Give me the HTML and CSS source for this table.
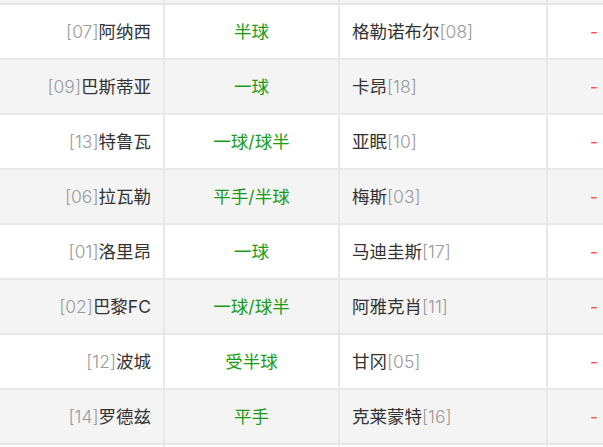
FILE: index.html
```html
<!DOCTYPE html>
<html lang="zh-CN">
<head>
<meta charset="utf-8">
<link rel="stylesheet" href="styles.css">
</head>
<body>
<div class="board">
  <div class="row even prev">
    <div class="cell home"></div>
    <div class="cell line"></div>
    <div class="cell away"></div>
    <div class="cell score"></div>
  </div>
  <div class="row">
    <div class="cell home"><span class="rank">[07]</span>阿纳西</div>
    <div class="cell line">半球</div>
    <div class="cell away">格勒诺布尔<span class="rank">[08]</span></div>
    <div class="cell score">-</div>
  </div>
  <div class="row even">
    <div class="cell home"><span class="rank">[09]</span>巴斯蒂亚</div>
    <div class="cell line">一球</div>
    <div class="cell away">卡昂<span class="rank">[18]</span></div>
    <div class="cell score">-</div>
  </div>
  <div class="row">
    <div class="cell home"><span class="rank">[13]</span>特鲁瓦</div>
    <div class="cell line">一球/球半</div>
    <div class="cell away">亚眠<span class="rank">[10]</span></div>
    <div class="cell score">-</div>
  </div>
  <div class="row even">
    <div class="cell home"><span class="rank">[06]</span>拉瓦勒</div>
    <div class="cell line">平手/半球</div>
    <div class="cell away">梅斯<span class="rank">[03]</span></div>
    <div class="cell score">-</div>
  </div>
  <div class="row">
    <div class="cell home"><span class="rank">[01]</span>洛里昂</div>
    <div class="cell line">一球</div>
    <div class="cell away">马迪圭斯<span class="rank">[17]</span></div>
    <div class="cell score">-</div>
  </div>
  <div class="row even">
    <div class="cell home"><span class="rank">[02]</span>巴黎FC</div>
    <div class="cell line">一球/球半</div>
    <div class="cell away">阿雅克肖<span class="rank">[11]</span></div>
    <div class="cell score">-</div>
  </div>
  <div class="row">
    <div class="cell home"><span class="rank">[12]</span>波城</div>
    <div class="cell line">受半球</div>
    <div class="cell away">甘冈<span class="rank">[05]</span></div>
    <div class="cell score">-</div>
  </div>
  <div class="row even">
    <div class="cell home"><span class="rank">[14]</span>罗德兹</div>
    <div class="cell line">平手</div>
    <div class="cell away">克莱蒙特<span class="rank">[16]</span></div>
    <div class="cell score">-</div>
  </div>
  <div class="row">
    <div class="cell home"></div>
    <div class="cell line"></div>
    <div class="cell away"></div>
    <div class="cell score"></div>
  </div>
</div>
</body>
</html>
```

FILE: styles.css
```css
html, body {
  margin: 0;
  padding: 0;
  background: #ffffff;
  overflow: hidden;
  width: 603px;
  height: 447px;
}

.board {
  width: 640px;
  font-family: Inter, "Noto Sans CJK SC", sans-serif;
  font-size: 17.5px;
  color: #333333;
}

.row {
  display: grid;
  grid-template-columns: 165px 175px 208px 92px;
  height: 55px;
  box-sizing: border-box;
  border-bottom: 2px solid #e8e8e8;
  background: #ffffff;
}

.row.even {
  background: #f4f4f4;
}

.row.prev {
  margin-top: -50px;
}

.cell {
  display: flex;
  align-items: center;
  box-sizing: border-box;
  border-right: 2px solid #e8e8e8;
  white-space: nowrap;
  line-height: 1;
}

.home {
  justify-content: flex-end;
  padding-right: 12px;
}

.line {
  justify-content: center;
  color: #1a9b1a;
}

.away {
  justify-content: flex-start;
  padding-left: 12px;
}

.score {
  justify-content: center;
  color: #ff4d4d;
  border-right: none;
}

.rank {
  color: #9a9a9a;
  font-weight: 300;
}
```
